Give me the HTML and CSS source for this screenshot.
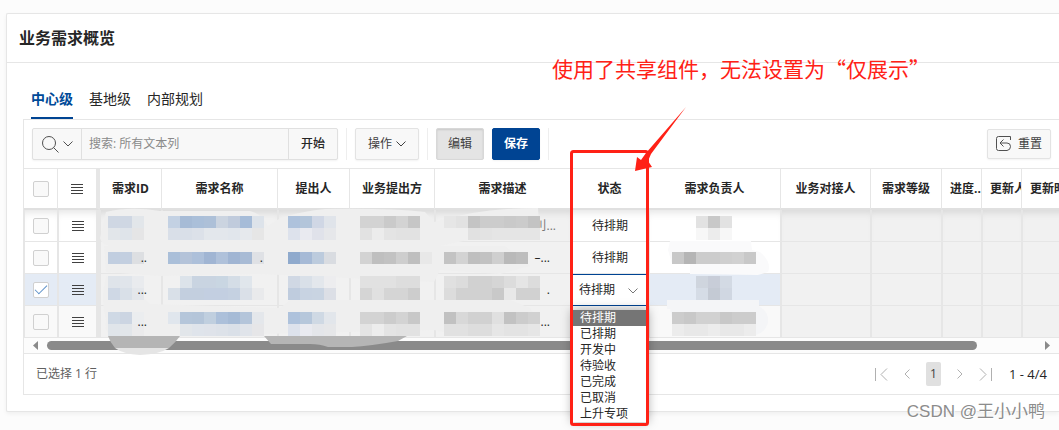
FILE: index.html
```html
<!DOCTYPE html>
<html lang="zh-CN">
<head>
    <meta charset="UTF-8">
    <meta name="viewport" content="width=device-width, initial-scale=1.0">
    <title>业务需求概览</title>
    <link rel="stylesheet" href="styles.css">
</head>
<body>
    <svg class="defs" width="0" height="0" aria-hidden="true">
        <symbol id="menu" viewBox="0 0 12 12"><path d="M0 1.5h12M0 4.5h12M0 7.5h12M0 10.5h12" stroke="#404040"/></symbol>
        <symbol id="down" viewBox="0 0 10 6"><path d="M.5 .5L5 5L9.500 .5" fill="none" stroke="currentColor"/></symbol>
    </svg>

    <main class="panel">
        <h1 class="panel-title">业务需求概览</h1>
        <div class="panel-body">
            <nav class="tabs">
                <a class="tab active" href="#center">中心级</a>
                <a class="tab" href="#base">基地级</a>
                <a class="tab" href="#inner">内部规划</a>
            </nav>

            <div class="grid">
                <div class="toolbar">
                    <div class="search">
                        <button class="search-icon" aria-label="搜索列">
                            <svg width="17" height="17" viewBox="0 0 17 17" fill="none" stroke="#505050"><circle cx="7" cy="7" r="6.500"/><path d="M11.500 11.500L16.500 16.500"/></svg>
                            <svg width="10" height="6"><use href="#down"/></svg>
                        </button>
                        <input class="search-text" type="text" placeholder="搜索: 所有文本列" aria-label="搜索">
                        <button class="go">开始</button>
                    </div>
                    <span class="sep"></span>
                    <button class="btn">操作<svg width="10" height="6"><use href="#down"/></svg></button>
                    <span class="sep"></span>
                    <button class="btn pressed">编辑</button>
                    <button class="btn primary">保存</button>
                    <span class="sep"></span>
                    <button class="btn reset">
                        <svg width="16" height="16" viewBox="0 0 16 16" fill="none" stroke="#505050"><path d="M14.500 4V.5H2.500Q.5 .5 .5 2.500V12.500Q.5 14.500 2.500 14.500H11Q14.500 14 14.500 10.500Q14.500 7 11 7H4M7.500 3.500L4 7L7.500 10.500"/></svg>
                        重置
                    </button>
                </div>

                <div class="table-wrap">
                    <table class="data">
                        <colgroup>
                            <col class="w-check"><col class="w-menu"><col class="w-id"><col class="w-name"><col class="w-person"><col class="w-dept"><col class="w-desc"><col class="w-status"><col class="w-owner"><col class="w-contact"><col class="w-level"><col class="w-small"><col class="w-small"><col class="w-time">
                        </colgroup>
                        <thead>
                            <tr>
                                <th><input type="checkbox" aria-label="全选"></th>
                                <th class="frozen"><svg width="12" height="12"><use href="#menu"/></svg></th>
                                <th>需求ID</th>
                                <th>需求名称</th>
                                <th>提出人</th>
                                <th>业务提出方</th>
                                <th>需求描述</th>
                                <th>状态</th>
                                <th>需求负责人</th>
                                <th>业务对接人</th>
                                <th>需求等级</th>
                                <th class="cut">进度..</th>
                                <th class="cut">更新人</th>
                                <th class="cut">更新时间</th>
                            </tr>
                        </thead>
                        <tbody>
                            <tr>
                                <td class="edit"><input type="checkbox" aria-label="选择第 1 行"></td>
                                <td class="edit frozen"><svg width="12" height="12"><use href="#menu"/></svg></td>
                                <td></td><td></td><td></td><td></td>
                                <td class="rest"><span>刂...</span></td>
                                <td class="edit">待排期</td>
                                <td class="edit"></td>
                                <td></td><td></td><td></td><td></td><td></td>
                            </tr>
                            <tr>
                                <td class="edit"><input type="checkbox" aria-label="选择第 2 行"></td>
                                <td class="edit frozen"><svg width="12" height="12"><use href="#menu"/></svg></td>
                                <td class="rest"><span>..</span></td>
                                <td class="rest"><span>.</span></td>
                                <td></td><td></td>
                                <td class="rest"><span>–...</span></td>
                                <td class="edit">待排期</td>
                                <td class="edit"></td>
                                <td></td><td></td><td></td><td></td><td></td>
                            </tr>
                            <tr class="selected">
                                <td class="edit"><input type="checkbox" checked aria-label="选择第 3 行"></td>
                                <td class="edit frozen"><svg width="12" height="12"><use href="#menu"/></svg></td>
                                <td class="rest"><span>...</span></td>
                                <td></td><td></td><td></td>
                                <td class="rest"><span>.</span></td>
                                <td class="status-cell">
                                    <select class="status" aria-label="状态">
                                        <option>待排期</option>
                                        <option>已排期</option>
                                        <option>开发中</option>
                                        <option>待验收</option>
                                        <option>已完成</option>
                                        <option>已取消</option>
                                        <option>上升专项</option>
                                    </select>
                                    <svg class="status-arrow" width="10" height="6"><use href="#down"/></svg>
                                </td>
                                <td class="edit"></td>
                                <td></td><td></td><td></td><td></td><td></td>
                            </tr>
                            <tr class="last">
                                <td class="edit"><input type="checkbox" aria-label="选择第 4 行"></td>
                                <td class="edit frozen"><svg width="12" height="12"><use href="#menu"/></svg></td>
                                <td class="rest"><span>...</span></td>
                                <td></td><td></td><td></td>
                                <td class="rest"><span>...</span></td>
                                <td class="edit"></td>
                                <td class="edit"></td>
                                <td></td><td></td><td></td><td></td><td></td>
                            </tr>
                        </tbody>
                    </table>
                </div>

                <div class="scrollbar">
                    <svg width="5" height="9" viewBox="0 0 5 9"><path d="M5 0V9L0 4.500z" fill="#8a8a8a"/></svg>
                    <div class="track"><div class="thumb"></div></div>
                    <svg width="5" height="9" viewBox="0 0 5 9"><path d="M0 0V9L5 4.500z" fill="#8a8a8a"/></svg>
                </div>

                <div class="footer">
                    <span>已选择 1 行</span>
                    <div class="pager">
                        <button aria-label="首页"><svg width="14" height="13" viewBox="0 0 14 13"><path d="M1.500 0V13M13 .5L7 6.500L13 12.500"/></svg></button>
                        <button aria-label="上一页"><svg width="6" height="10" viewBox="0 0 6 10"><path d="M5.500 .5L1 5L5.500 9.500"/></svg></button>
                        <button class="current">1</button>
                        <button aria-label="下一页"><svg width="6" height="10" viewBox="0 0 6 10"><path d="M.5 .5L5 5L.5 9.500"/></svg></button>
                        <button aria-label="末页"><svg width="14" height="13" viewBox="0 0 14 13"><path d="M12.500 0V13M1 .5L7 6.500L1 12.500"/></svg></button>
                        <span class="range">1 - 4/4</span>
                    </div>
                </div>
            </div>
        </div>
    </main>

    <!-- hidden cell contents -->
    <svg class="mosaic" width="1059" height="430" aria-hidden="true">
        <g fill="#efefef">
            <path d="M106 212Q130 206 160 211L250 211Q262 214 268 226Q280 214 325 209Q390 208 425 212L434 222Q480 208 538 208L539 224L530 232L500 233L440 246L300 250L200 252L120 246Q102 248 100 238Z"/>
            <path d="M104 246H505L530 266L500 274L440 270L434 282L260 274L160 276L106 272Z"/>
            <path d="M106 276Q100 300 106 320Q104 330 110 336H184L262 334L434 330L442 332H536L540 324L530 308L510 300H290L280 308L150 304L136 290Z"/>
        </g>
        <path d="M108 336H180Q176 342 169 348H115Q110 342 108 336Z" fill="#b5b5b5"/>
        <path d="M115 348H169Q160 354 140 355Q123 354 115 348Z" fill="#e5e5e5"/>
        <path d="M264 336H407L398 341Q370 346 352 347H328Q320 344 310 344H271Z" fill="#b5b5b5"/>
        <path d="M670 241H751L752 250L760 252Q772 262 768 272L758 275L690 274V264H672L668 250Z" fill="#fafafb"/>
        <path d="M667 300H759V306Q769 312 768 322Q766 332 756 335L676 335L670 309H667Z" fill="#f4f5f7"/>
        <g id="blocks"></g>
    </svg>

    <ul class="menu">
        <li class="on">待排期</li>
        <li>已排期</li>
        <li>开发中</li>
        <li>待验收</li>
        <li>已完成</li>
        <li>已取消</li>
        <li>上升专项</li>
    </ul>

    <p class="note">使用了共享组件，无法设置为“仅展示”</p>
    <svg class="marks" width="1059" height="430" aria-hidden="true">
        <rect x="571.500" y="151.500" width="76" height="273" rx="2" fill="none" stroke="#ff2116" stroke-width="3"/>
        <path d="M686 107L651 154L648 161L652 167L635 171L637 157L641 160L646 153Z" fill="#ff2116"/>
    </svg>
    <p class="watermark">CSDN @王小小鸭</p>

    <script src="script.js"></script>
</body>
</html>
```

FILE: styles.css
```css
* {
    box-sizing: border-box;
}
body {
    margin: 0;
    padding: 13px 0 0 6px;
    min-height: 100vh;
    position: relative;
    overflow: hidden;
    background: #fcfcfc;
    color: #262626;
    font-family: "Open Sans", "Noto Sans CJK SC", sans-serif;
    font-size: 12px;
    line-height: 16px;
}
button, input, select {
    font: inherit;
    color: inherit;
    margin: 0;
}
.defs {
    position: absolute;
}
.panel {
    background: #fff;
    border: 1px solid #e6e6e6;
    border-right: 0;
    border-radius: 2px 0 0 2px;
    box-shadow: 0 2px 4px rgba(0, 0, 0, 0.05);
}
.panel-title {
    margin: 0;
    padding: 12px;
    font-size: 16px;
    line-height: 24px;
    font-weight: bold;
    border-bottom: 1px solid #e6e6e6;
}
.panel-body {
    padding: 16px 0 16px 16px;
}
.tabs {
    display: flex;
    gap: 16px;
    padding: 0 8px;
}
.tab {
    padding: 8px 0;
    height: 40px;
    line-height: 24px;
    font-size: 14px;
    color: #262626;
    text-decoration: none;
}
.tab.active {
    color: #004a98;
    font-weight: bold;
    border-bottom: 2px solid #004493;
}
.grid {
    border: 1px solid #e6e6e6;
    border-right: 0;
}
.toolbar {
    display: flex;
    align-items: center;
    gap: 8px;
    height: 48px;
    padding: 0 8px;
}
.search {
    display: flex;
    width: 306px;
    height: 32px;
    border: 1px solid #e0e0e0;
    border-radius: 2px;
    background: #f8f8f8;
    box-shadow: 0 1px 2px rgba(0, 0, 0, 0.05);
}
.search button {
    display: flex;
    align-items: center;
    justify-content: center;
    border: 0;
    background: none;
    width: 48px;
    padding: 0;
    font-weight: 500;
}
.search-icon {
    gap: 4px;
    color: #505050;
}
.search-text {
    flex: 1;
    min-width: 0;
    padding: 0 7px;
    border: solid #e0e0e0;
    border-width: 0 1px;
    background: none;
}
.search-text::placeholder {
    color: #8a8a8a;
    opacity: 1;
}
.sep {
    width: 1px;
    height: 32px;
    background: #eee;
}
.btn {
    display: flex;
    align-items: center;
    justify-content: center;
    gap: 4px;
    height: 32px;
    padding: 0 12px;
    border: 1px solid #e3e3e3;
    border-radius: 2px;
    background: #f8f8f8;
    color: #404040;
    box-shadow: 0 1px 2px rgba(0, 0, 0, 0.05);
}
.btn.pressed {
    padding: 0 11px;
    background: #e4e4e4;
    border-color: #d8d8d8;
    box-shadow: inset 0 1px 2px rgba(0, 0, 0, 0.12);
}
.btn.primary {
    padding: 0 11px;
    background: #004493;
    border-color: #004493;
    color: #fff;
    font-weight: bold;
}
.btn.reset {
    height: 30px;
    padding: 0 8px;
    gap: 6px;
    margin-left: auto;
}
.table-wrap {
    overflow: hidden;
    border-top: 1px solid #e6e6e6;
}
.data {
    table-layout: fixed;
    width: 1088px;
    border-collapse: separate;
    border-spacing: 0;
}
.w-check { width: 34px; }
.w-menu { width: 42px; }
.w-id { width: 62px; }
.w-name { width: 116px; }
.w-person { width: 72px; }
.w-dept { width: 85px; }
.w-desc { width: 136px; }
.w-status { width: 78px; }
.w-owner { width: 132px; }
.w-contact { width: 90px; }
.w-level { width: 71px; }
.w-small { width: 40px; }
.w-time { width: 90px; }
.data th, .data td {
    padding: 0;
    text-align: center;
    white-space: nowrap;
    overflow: hidden;
}
.data th {
    height: 41px;
    font-weight: bold;
    border-right: 1px solid #e6e6e6;
    border-bottom: 2px solid #e0e0e0;
}
.data th.cut {
    padding-left: 8px;
    text-align: left;
}
.data td {
    height: 32px;
    background: #f1f1f1;
    border: solid #e6e6e6;
    border-width: 0 1px 1px;
}
.data td.edit {
    background: #fff;
}
.data .last td.edit {
    background: #f9f9f9;
}
.data .selected td.edit {
    background: #e4ebf5;
}
.data th.frozen, .data td.frozen {
    border-right: 4px solid #e6e6e6;
}
.data tbody tr:first-child td {
    box-shadow: inset 0 8px 8px -6px rgba(0, 0, 0, 0.12);
}
.data td.rest {
    text-align: right;
    padding-right: 14px;
}
.data td.rest:nth-child(7) {
    padding-right: 20px;
}
.data tr:first-child td.rest:nth-child(7) {
    padding-right: 14px;
    color: #777;
}
.rest span {
    position: relative;
    z-index: 1;
}
.data svg {
    vertical-align: middle;
}
.data input {
    appearance: none;
    width: 16px;
    height: 16px;
    border: 1px solid #d0d0d0;
    border-radius: 2px;
    background: #f9f9f9;
    vertical-align: middle;
}
.data input:checked {
    display: inline-grid;
    place-items: center;
    background: #fff;
}
.data input:checked::before {
    content: "";
    width: 11px;
    height: 5px;
    border: solid #5a8fc8;
    border-width: 0 0 1px 1px;
    transform: rotate(-45deg);
    margin-bottom: 4px;
}
.data td.status-cell {
    position: relative;
    background: #fff;
    border: 1px solid #004493;
    border-left: 0;
}
.status {
    appearance: none;
    display: block;
    width: 100%;
    height: 29px;
    padding: 0 8px;
    border: 0;
    background: none;
}
.status-arrow {
    position: absolute;
    right: 10px;
    top: 13px;
    color: #777;
    pointer-events: none;
}
.scrollbar {
    display: flex;
    align-items: center;
    gap: 9px;
    height: 16px;
    padding: 0 9px;
    background: #fcfcfc;
    border-bottom: 1px solid #e6e6e6;
}
.track {
    flex: 1;
}
.thumb {
    width: 94%;
    height: 9px;
    border-radius: 5px;
    background: #8a8a8a;
}
.footer {
    display: flex;
    align-items: center;
    justify-content: space-between;
    height: 40px;
    padding: 0 12px;
    color: #606060;
}
.pager {
    display: flex;
    align-items: center;
    gap: 16px;
}
.pager button {
    display: flex;
    padding: 0;
    border: 0;
    background: none;
}
.pager svg {
    fill: none;
    stroke: #b0b0b0;
}
.pager .current {
    padding: 4px;
    border-radius: 2px;
    background: #e0e0e0;
    color: #404040;
}
.range {
    color: #262626;
    font-size: 13px;
}
.mosaic, .marks {
    position: absolute;
    left: 0;
    top: 0;
    pointer-events: none;
}
.menu {
    position: absolute;
    z-index: 2;
    left: 572px;
    top: 310px;
    width: 76px;
    margin: 0;
    padding: 0;
    list-style: none;
    background: #fff;
    box-shadow: 0 0 10px rgba(0, 0, 0, 0.35);
}
.marks {
    z-index: 3;
}
.menu li {
    padding: 0 8px;
}
.menu .on {
    background: #757575;
    color: #fff;
}
.note {
    position: absolute;
    left: 552px;
    top: 54px;
    margin: 0;
    color: #ff2116;
    font-family: "Noto Sans CJK SC", sans-serif;
    font-size: 21px;
    line-height: 28px;
    white-space: nowrap;
}
.watermark {
    position: absolute;
    right: 14px;
    top: 400px;
    margin: 0;
    color: #8c8c8c;
    font-family: "Liberation Sans", "Noto Sans CJK SC", sans-serif;
    font-size: 17px;
    line-height: 24px;
    text-shadow: 1px 1px 0 #fff;
}
```

FILE: script.js
```js
// x, y, fill of each 12px block from left to right
const rows = [
    [108, 216, 'cfd7e3 cfd7e3 e2e6ea'],
    [108, 228, 'e2e6ea dfe4ea e5e5e6'],
    [108, 252, 'c1cee0 c3cfe0 dddfe2'],
    [108, 276, 'dfe4ea e0e5eb e9ebee'],
    [108, 288, 'cfd8e5 d9e0e8 e4e7eb'],
    [108, 312, 'cfd9e5 ccd5e2 ebedef'],
    [108, 324, 'e0e5ea e2e6ea ebebec'],
    [168, 216, 'c3d1e3 a6bbd6 aabfd9 adc0d8 cbd4e0 c0cbdc a6bcd8 dde3ea'],
    [168, 228, 'd9dfe8 d9dfe8 dce1e9 e3e7ec e3e7ec e1e6ec e6e9ed e6e6e6'],
    [168, 252, 'aabfd9 b4c3d9 adc0da a0b5d3 afc1da a0b5d3 a8bbd5 dfe1e5'],
    [180, 276, 'dce3ea c9d4e1 c9d4e1 c9d6e2 d4dde6 e0e6ec'],
    [168, 288, 'd9e0e8 c3cfdf c3cfdf c3cfe1 c3cfe1 c5d1e1 dae0e8 e9eaec'],
    [168, 312, 'e0e6ed b5c6da b4c5d9 c0cfdf acc0da a6bbd6 b4c5da e4e7eb'],
    [180, 324, 'e2e6ea dfe4eb dfe3ea dde2e9 dae0e8 e0e4ea e6e6e8'],
    [288, 216, 'aec2dc b3c5da d0d7e5 e0e4ea'],
    [288, 228, 'dde2ec e9eaf0 e0e2ea e6e7ea'],
    [288, 252, '8faacd a6bad6 bccbdd d9dce1'],
    [288, 276, 'd0d8e4 d9e0e8 e3e7ec ededef'],
    [288, 288, 'bfccde c8d3e2 c9d4e2 dcdfe6'],
    [288, 312, 'aec2dc b6c7db cfd9e4 e2e6eb'],
    [288, 324, 'dde2ec e9eaf0 e4e6ea e6e7e9'],
    [360, 216, 'd3d3d3 d3d3d3 cacaca d3d3d3 c6c6c6'],
    [360, 228, 'e2e2e2 ececec e4e4e4 e2e2e2 e2e2e2'],
    [360, 252, 'd3d3d3 bfbfbf c2c2c2 cecece bfbfbf e8e8e8'],
    [360, 276, 'e1e1e1 e1e1e1 e1e1e1 dddddd dddddd'],
    [360, 288, 'd5d5d5 e0e0e0 d5d5d5 d5d5d5 cdcdcd'],
    [360, 312, 'd3d3d3 d3d3d3 cccccc d3d3d3 c8c8c8'],
    [360, 324, 'e4e4e4 ededed e4e4e4 e2e2e2 e2e2e2'],
    [444, 216, 'e6e6e6 e2e2e2 c4c4c4 cccccc cccccc c9c9c9 cbcbcb c3c3c3'],
    [468, 228, 'e1e1e1 e3e3e3 e5e5e5 e5e5e5 e5e5e5 e5e5e5'],
    [444, 252, 'c3c3c3 d3d3d3 bfbfbf c2c2c2 cfcfcf b9b9b9 bdbdbd'],
    [444, 276, 'e0e0e0 dcdcdc d1d1d1 d1d1d1 d5d5d5 dcdcdc e5e5e5 dcdcdc'],
    [444, 288, 'dcdcdc d1d1d1 d1d1d1 d1d1d1 c9c9c9 e8e8e8 d1d1d1 d1d1d1'],
    [444, 312, 'c1c1c1 d8d8d8 d1d1d1 d1d1d1 e0e0e0 c2c2c2 cccccc d1d1d1'],
    [444, 324, 'e1e1e1 e1e1e1 dddddd dddddd e6e6e6 e3e3e3 e3e3e3 e6e6e6'],
    [696, 216, 'e2e2e2 c8c8c8 e2e2e2'],
    [696, 228, 'f7f7f7 ececec f7f7f7'],
    [672, 252, 'c8c8c8 b5b5b5 cccccc cccccc cfcfcf d1d1d1 c8c8c8'],
    [696, 276, 'cfd5de c8cdd8 d3dae4'],
    [696, 288, 'd5dce6 c4cad4 d0d7e2'],
    [672, 312, 'cccccc c8c8c8 d1d1d1 d1d1d1 c8c8c8 cccccc cccccc'],
    [672, 324, 'ececec e8e8e8 e8e8e8 ececec e8e8e8 e8e8e8 ececec']
];

const blocks = document.getElementById('blocks');
rows.forEach(([x, y, fills]) => {
    fills.split(' ').forEach((fill, i) => {
        const rect = document.createElementNS('http://www.w3.org/2000/svg', 'rect');
        rect.setAttribute('x', x + i * 12);
        rect.setAttribute('y', y);
        rect.setAttribute('width', 12);
        rect.setAttribute('height', 12);
        rect.setAttribute('fill', '#' + fill);
        blocks.appendChild(rect);
    });
});
```
